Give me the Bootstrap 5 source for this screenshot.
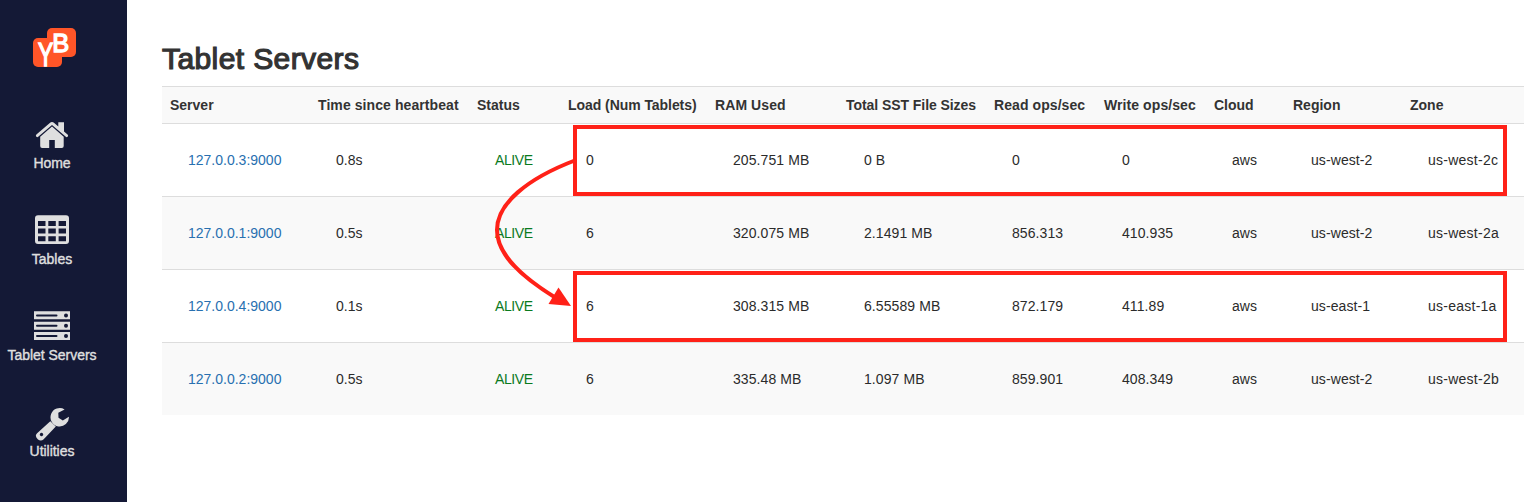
<!DOCTYPE html>
<html lang="en">
<head>
<meta charset="utf-8">
<title>Tablet Servers</title>
<meta name="viewport" content="width=device-width, initial-scale=1">
<link href="https://cdn.jsdelivr.net/npm/bootstrap@5.3.0/dist/css/bootstrap.min.css" rel="stylesheet">
<style>
body{font-family:"Liberation Sans",Arial,sans-serif;font-size:14px;line-height:20px;color:#333;height:502px;overflow:hidden}
.sidebar{width:127px;height:502px;background:#141936;padding-right:23px}
.brand{height:118px;padding-top:27px}
.brand svg{overflow:visible;margin-left:4px}
.sidebar .nav-link{height:96px;padding:0;color:#dfdfdf;line-height:20px;white-space:nowrap;-webkit-text-stroke:.4px #dfdfdf;letter-spacing:-.03px}
.sidebar .nav-link svg{display:block;width:38px;height:35px;-webkit-text-stroke:0}
.page{padding:42px 0 0 35px;min-width:0}
h1{font-size:30px;line-height:33px;font-weight:400;-webkit-text-stroke:1.2px #333;letter-spacing:.4px;margin:0 0 11px}
.servers{width:1402px;table-layout:fixed;color:#333;--bs-table-color:#333;--bs-table-bg:transparent}
.servers>thead>tr>th{padding:8px;height:37px;background:#f9f9f9;color:#333;border:0;border-top:1px solid #ddd;white-space:nowrap;line-height:20px;font-size:14px}
.servers .wide{letter-spacing:.08px}
.servers .tight{letter-spacing:-.06px}
.servers>tbody>tr>td{padding:0 8px 0 26px;height:73px;border:0;border-top:1px solid #ddd;white-space:nowrap;color:#2b2b2b}
.servers>tbody>tr>td:nth-child(n+5){letter-spacing:.08px}
.servers>tbody>tr>td:last-child{letter-spacing:.25px}
.servers>tbody>tr:nth-child(even)>td{background:#f9f9f9}
.servers>tbody>tr:last-child>td{height:72px;padding-bottom:0}
.servers a{color:#2870b0}
.servers .alive{color:#0a7a1e!important;letter-spacing:-.4px}
.annotation{left:0;top:0;pointer-events:none}
</style>
</head>
<body class="position-relative bg-white">
<div class="d-flex">
  <aside class="sidebar flex-shrink-0">
    <div class="brand d-flex justify-content-center">
      <svg width="44" height="42" viewBox="32 27 44 42">
        <rect x="33" y="38" width="29" height="29" rx="5" fill="#ff5528"/>
        <rect x="47" y="28" width="29" height="29" rx="5" fill="#ff5528"/>
        <g fill="#fff" stroke="#fff" font-family="Liberation Sans, sans-serif">
          <text transform="translate(37.900 66) scale(.68 1)" font-size="33.500" stroke-width="1.500">Y</text>
          <text transform="translate(52.300 51.500) scale(.96 1)" font-size="26.500" stroke-width="1.400">B</text>
        </g>
      </svg>
    </div>
    <nav class="nav flex-column">
      <a class="nav-link d-flex flex-column align-items-center" href="#">
        <svg viewBox="33 118 38 35" fill="#dfdfdf"><path d="M52 122q1.200 0 2.200.9L58.300 126.500v-4.300H64v9.200l3.600 3.200q1 1 .2 2-.9 1-2 .2L52 124.900 38.200 136.800q-1.200.8-2-.2t.2-2L49.800 122.900q1-.9 2.200-.9z"/><path d="M52 126.600 63.700 136.700V146q0 1.900-1.900 1.900H54.800V140h-5.600v7.900h-7.100q-1.900 0-1.900-1.900v-9.300z"/></svg>Home
      </a>
      <a class="nav-link d-flex flex-column align-items-center" href="#">
        <svg viewBox="33 214 38 35" fill="#dfdfdf" fill-rule="evenodd"><path d="M38 215.300h28q3 0 3 3V241q0 3-3 3H38q-3 0-3-3v-22.700q0-3 3-3zM38 221v5h7.500v-5zm10.300 0v5h7.500v-5zm10.300 0v5H66v-5zM38 228.600v5h7.500v-5zm10.300 0v5h7.500v-5zm10.300 0v5H66v-5zM38 236.200v5h7.500v-5zm10.300 0v5h7.500v-5zm10.300 0v5H66v-5z"/></svg>Tables
      </a>
      <a class="nav-link d-flex flex-column align-items-center" href="#">
        <svg viewBox="33 310 38 35"><path fill="#dfdfdf" d="M34 311.300h36v8H34zM34 321.800h36v8H34zM34 332.100h36v8H34z"/><path stroke="#141936" stroke-width="2" stroke-linecap="round" d="M37 315.500h19.500M37 325.800h19.500M37 336.100h19.500"/><g fill="#141936"><circle cx="66" cy="315.500" r="2"/><circle cx="66" cy="325.800" r="2"/><circle cx="66" cy="336.100" r="2"/></g></svg>Tablet Servers
      </a>
      <a class="nav-link d-flex flex-column align-items-center" href="#">
        <svg viewBox="33 406 38 35" fill="#dfdfdf" fill-rule="evenodd"><path d="M64.600 409.500A9.200 9.200 0 1 0 68.900 416.800L62.800 420.400 58.500 417.800 58.300 412.700z"/><path d="M50.300 421.300 55.800 426.600 43.700 439.200Q41 441.700 38 439.500 34.200 436 37.100 433.300zM41.500 432.800a1.700 1.700 0 1 0 .01 0z"/></svg>Utilities
      </a>
    </nav>
  </aside>
  <main class="page flex-grow-1 overflow-hidden">
    <h1>Tablet Servers</h1>
    <table class="table servers mb-0 align-middle">
      <colgroup><col style="width:148px"><col style="width:159px"><col style="width:91px"><col style="width:147px"><col style="width:131px"><col style="width:148px"><col style="width:110px"><col style="width:110px"><col style="width:79px"><col style="width:117px"><col style="width:162px"></colgroup>
      <thead><tr><th>Server</th><th class="wide">Time since heartbeat</th><th>Status</th><th class="tight">Load (Num Tablets)</th><th class="wide">RAM Used</th><th class="tight">Total SST File Sizes</th><th class="wide">Read ops/sec</th><th class="wide">Write ops/sec</th><th>Cloud</th><th>Region</th><th>Zone</th></tr></thead>
      <tbody>
        <tr><td><a class="text-decoration-none" href="#">127.0.0.3:9000</a></td><td>0.8s</td><td class="alive">ALIVE</td><td>0</td><td>205.751 MB</td><td>0 B</td><td>0</td><td>0</td><td>aws</td><td>us-west-2</td><td>us-west-2c</td></tr>
        <tr><td><a class="text-decoration-none" href="#">127.0.0.1:9000</a></td><td>0.5s</td><td class="alive">ALIVE</td><td>6</td><td>320.075 MB</td><td>2.1491 MB</td><td>856.313</td><td>410.935</td><td>aws</td><td>us-west-2</td><td>us-west-2a</td></tr>
        <tr><td><a class="text-decoration-none" href="#">127.0.0.4:9000</a></td><td>0.1s</td><td class="alive">ALIVE</td><td>6</td><td>308.315 MB</td><td>6.55589 MB</td><td>872.179</td><td>411.89</td><td>aws</td><td>us-east-1</td><td>us-east-1a</td></tr>
        <tr><td><a class="text-decoration-none" href="#">127.0.0.2:9000</a></td><td>0.5s</td><td class="alive">ALIVE</td><td>6</td><td>335.48 MB</td><td>1.097 MB</td><td>859.901</td><td>408.349</td><td>aws</td><td>us-west-2</td><td>us-west-2b</td></tr>
      </tbody>
    </table>
  </main>
</div>
<svg class="annotation position-absolute" width="1524" height="502" fill="none" stroke="#ff2118" stroke-width="4">
  <rect x="575" y="127" width="930" height="67"/>
  <rect x="575" y="273" width="930" height="67"/>
  <path d="M576 160C526 179 497 204 497 230C497 254 520 276 556 298"/>
  <path d="M571 306 558.500 287.500 548.500 304z" fill="#ff2118" stroke="none"/>
</svg>
<script src="https://cdn.jsdelivr.net/npm/bootstrap@5.3.0/dist/js/bootstrap.bundle.min.js"></script>
</body>
</html>
